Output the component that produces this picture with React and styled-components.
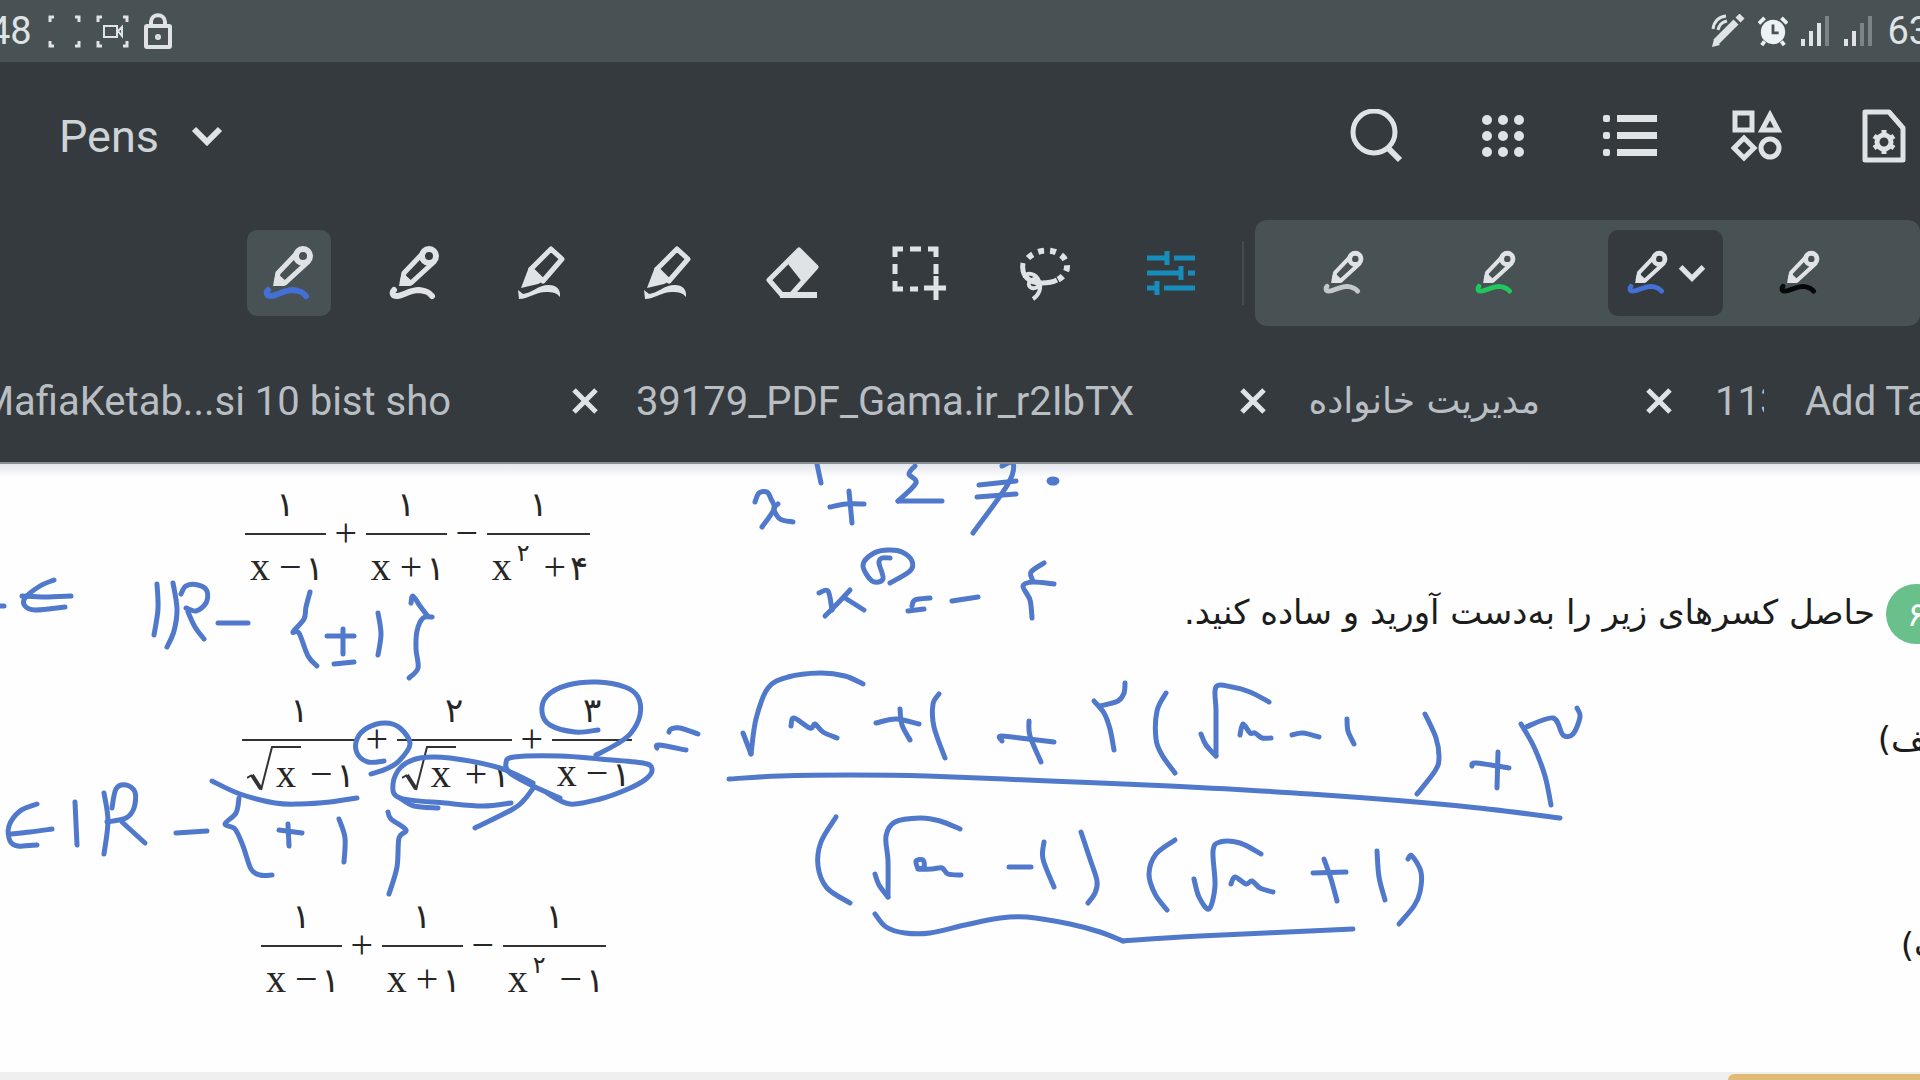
import React from "react";
import styled, { createGlobalStyle } from "styled-components";

const INK = "#5079cb";
const LIGHT = "#dfe3e5";

// every stroke is a flat list of x y pairs, smoothed by toPath
const inkStrokes = [
  // first domain
  "-4 605 4 605",
  "54 579 40 585 25 597 25 605 35 609 65 606",
  "22 595 45 596 71 595",
  "157 583 158 608 154 634",
  "173 582 177 608 174 630 167 646",
  "181 593 186 585 198 584 207 590 206 602 196 610 186 607",
  "188 611 195 626 204 638",
  "218 622 248 622",
  "310 591 306 606 304 618 293 631 299 632 308 655 317 665",
  "327 635 354 635",
  "343 628 343 653",
  "334 663 354 661",
  "378 612 381 633 378 654",
  "411 602 413 595 420 605 428 615 432 616 423 617 417 630 416 648 418 667 409 677",
  // second domain
  "37 803 20 810 9 825 10 840 18 845 37 844",
  "10 833 30 831 52 828",
  "75 801 77 844",
  "104 792 108 820 104 853",
  "112 807 116 788 126 784 135 791 134 807 126 817 107 821",
  "122 821 145 842",
  "176 832 207 830",
  "239 797 236 812 225 823 235 828 243 845 251 868 260 874 272 874",
  "279 829 302 832",
  "288 823 289 845",
  "339 818 345 837 344 861",
  "388 811 391 818 406 829 399 837 397 866 389 893",
  // marks on the printed fractions
  "212 780 240 793 275 802 300 803 330 801 357 797",
  "384 760 368 761 357 752 357 738 367 727 385 722 400 727 410 743 399 760 386 768 371 773",
  "511 802 483 805 445 802 400 797 393 783 401 766 420 757 450 757 500 767 533 782",
  "400 797 414 805 438 807",
  "534 786 524 799 513 808 475 827",
  "560 797 533 785 510 772 506 762 514 756 560 755 600 758 643 762 652 768 646 778 628 788 600 798 570 803 547 792",
  "598 729 575 731 550 724 542 711 547 695 568 684 597 681 625 686 638 696 640 714 631 732 617 743 596 754",
  "669 731 671 728 680 727 698 733",
  "657 747 659 744 686 749",
  // condition on the denominator
  "755 501 759 492 767 491 771 498 774 508 762 526",
  "778 503 774 508 780 518 793 521",
  "817 463 821 482",
  "830 506 846 503 864 503",
  "849 490 852 522",
  "915 465 909 473 916 482 898 500",
  "898 500 942 500",
  "979 484 1016 480",
  "977 496 1016 493",
  "1002 465 1013 462 1008 483 973 532",
  "819 592 828 590 832 609",
  "850 589 838 602 825 615",
  "845 597 864 609",
  "890 582 910 570 912 560 902 551 889 549 874 552 863 564 872 580 883 578 879 562 882 557 890 557",
  "912 605 915 599 930 597",
  "908 610 924 608",
  "952 600 978 596",
  "1044 562 1031 571 1033 580",
  "1054 583 1033 581 1023 585 1030 599 1032 617",
  // numerator of the result
  "743 732 751 753",
  "751 753 756 718 768 687 788 676 820 672 845 675 863 683",
  "791 725 794 717 810 727 815 723 823 731 837 737",
  "876 722 896 718 919 723",
  "900 708 902 724 910 739",
  "939 693 933 703 934 726 945 757",
  "1002 740 1001 735 1028 738 1054 741",
  "1029 720 1030 735 1041 761",
  "1094 700 1104 712 1110 728 1114 749",
  "1100 705 1118 700 1124 692 1125 682",
  "1166 692 1157 710 1156 738 1162 754 1175 772",
  "1201 733 1206 744 1216 755",
  "1216 755 1216 710 1216 686 1232 686 1250 691 1269 701",
  "1240 734 1243 723 1250 732 1255 732 1262 737 1271 737",
  "1292 734 1303 732 1319 736",
  "1347 718 1348 730 1354 743",
  "1425 713 1436 737 1439 757 1435 770 1417 793",
  "1472 765 1476 762 1509 767",
  "1498 751 1497 787",
  "1521 723 1534 746 1545 775 1551 804",
  "1526 726 1553 717 1563 734 1573 733 1580 716 1577 707",
  "729 778 780 775 850 774 927 775 1050 780 1170 785 1310 793 1460 805 1560 817",
  // denominator of the result
  "836 816 821 841 818 865 827 887 850 902",
  "875 873 879 884 888 896",
  "888 896 888 860 886 835 895 821 920 817 940 820 960 828",
  "918 868 916 860 923 859 924 866 918 868 932 868 942 867 948 873 961 874",
  "1009 866 1031 866",
  "1044 841 1043 858 1054 886",
  "1081 831 1090 858 1097 880 1095 892 1088 902",
  "1175 839 1156 853 1149 873 1155 893 1167 909",
  "1194 878 1199 896 1209 908 1215 885 1213 850 1220 841 1240 842 1261 853",
  "1231 883 1235 876 1246 883 1252 880 1260 887 1273 891",
  "1313 872 1346 871",
  "1324 858 1331 878 1337 900",
  "1377 850 1379 876 1385 899",
  "1408 858 1412 855 1421 871 1420 891 1414 905 1399 923",
  "875 913 886 926 905 932 930 932 965 924 1000 917 1027 916 1070 923 1100 931 1123 940",
  "1123 940 1200 935 1353 928",
];

const toPath = (stroke) => {
  const n = stroke.split(" ").map(Number);
  const pts = [];
  for (let i = 0; i < n.length; i += 2) pts.push([n[i], n[i + 1]]);
  let d = `M${pts[0].join(" ")}`;
  for (let i = 0; i < pts.length - 1; i++) {
    const a = pts[i - 1] || pts[i];
    const b = pts[i];
    const c = pts[i + 1];
    const e = pts[i + 2] || c;
    d += `C${b[0] + (c[0] - a[0]) / 6} ${b[1] + (c[1] - a[1]) / 6} ${
      c[0] - (e[0] - b[0]) / 6
    } ${c[1] - (e[1] - b[1]) / 6} ${c[0]} ${c[1]}`;
  }
  return d;
};

const PenIcon = ({ ink = LIGHT, size = 52 }) => (
  <svg width={size} height={(size * 56) / 52} viewBox="0 0 52 56" fill="none">
    <path
      d="M13 38 L15 28 L35 7 M46 16 L22 38 H13"
      stroke={LIGHT}
      strokeWidth="5"
      strokeLinejoin="round"
    />
    <path d="M10 41 L13 27 L25 38 L21 41 Z" fill={LIGHT} />
    <circle cx="40" cy="11" r="7" stroke={LIGHT} strokeWidth="6" />
    <path
      d="M5 45 C3 47 3 51 7 51 C14 51 20 45 30 45 C37 46 40 47 43 51"
      stroke={ink}
      strokeWidth="6"
      strokeLinecap="round"
    />
  </svg>
);

const HighlighterIcon = () => (
  <svg width="52" height="56" viewBox="0 0 52 56" fill="none">
    <path
      d="M36 4 L47 14 L28 36 L16 24 Z"
      stroke={LIGHT}
      strokeWidth="5"
      strokeLinejoin="round"
    />
    <path d="M14 22 L29 36 L23 39 L6 43 Z" fill={LIGHT} />
    <path
      d="M3 45 L4 54 C13 54 21 47 31 47 C38 47 42 48 45 52 C46 44 41 40 34 40 C23 40 17 48 8 49 Z"
      fill={LIGHT}
    />
  </svg>
);

const EraserIcon = () => (
  <svg width="54" height="56" viewBox="0 0 54 56" fill="none">
    <path
      d="M33 5 L50 22 L25 50 L16 50 L3 35 Z"
      stroke={LIGHT}
      strokeWidth="5"
      strokeLinejoin="round"
    />
    <path d="M33 5 L51 22 L37 38 L22 19 Z" fill={LIGHT} />
    <path d="M14 50 H51" stroke={LIGHT} strokeWidth="6" />
  </svg>
);

const SelectIcon = () => (
  <svg width="54" height="56" viewBox="0 0 54 56" stroke={LIGHT} strokeWidth="5" fill="none">
    <path d="M3 12 V4 H11 M36 4 H44 V12 M3 36 V44 H11 M18 4 H29 M3 19 V29 M44 19 V29 M18 44 H26" />
    <path d="M44 31 V55 M32 43 H55" />
  </svg>
);

const LassoIcon = () => (
  <svg width="54" height="56" viewBox="0 0 54 56" stroke={LIGHT} fill="none">
    <path d="M10 13 C20 3 38 3 46 13 C53 23 47 33 35 37" strokeWidth="6" strokeDasharray="6 6" />
    <path d="M5 18 C3 30 10 38 24 38 C30 38 35 37 39 35" strokeWidth="5" />
    <path
      d="M7 33 C7 26 18 28 21 36 C24 43 21 50 15 54 M18 34 C11 34 8 41 14 43 C18 44 21 41 22 38"
      strokeWidth="4"
    />
  </svg>
);

const SlidersIcon = () => (
  <svg width="50" height="46" viewBox="0 0 50 46" stroke="#168dbb" strokeWidth="5" fill="none">
    <path d="M1 8 H21 M28 8 H49 M21 1 V15" />
    <path d="M1 23 H35 M42 23 H49 M35 16 V30" />
    <path d="M1 38 H11 M18 38 H49 M11 31 V45" />
  </svg>
);

const ChevronIcon = ({ w = 32, h = 20 }) => (
  <svg width={w} height={h} viewBox="0 0 32 20" fill="none">
    <path d="M3 3 L16 16 L29 3" stroke={LIGHT} strokeWidth="6" />
  </svg>
);

const SearchIcon = () => (
  <svg width="54" height="54" viewBox="0 0 54 54" stroke={LIGHT} strokeWidth="5" fill="none">
    <circle cx="25" cy="23" r="21" />
    <path d="M38 38 L51 51" strokeWidth="6" />
  </svg>
);

const GridIcon = () => (
  <svg width="42" height="42" viewBox="0 0 42 42" fill={LIGHT}>
    {[5, 21, 37].map((y) =>
      [5, 21, 37].map((x) => <circle key={x + "-" + y} cx={x} cy={y} r="5" />)
    )}
  </svg>
);

const ListIcon = () => (
  <svg width="54" height="44" viewBox="0 0 54 44" fill={LIGHT}>
    {[5, 22, 39].map((y) => (
      <g key={y}>
        <rect x="0" y={y - 4} width="7" height="7" rx="2" />
        <rect x="14" y={y - 4} width="40" height="7" />
      </g>
    ))}
  </svg>
);

const ShapesIcon = () => (
  <svg width="52" height="52" viewBox="0 0 52 52" stroke={LIGHT} strokeWidth="5" fill="none">
    <rect x="4" y="3" width="17" height="17" />
    <path d="M39 5 L47 20 H31 Z" />
    <path d="M13 28 L23 38 L13 48 L3 38 Z" />
    <circle cx="39" cy="38" r="9" />
  </svg>
);

const PageSettingsIcon = () => (
  <svg width="44" height="54" viewBox="0 0 44 54" stroke={LIGHT} fill="none">
    <path d="M3 3 H27 L41 19 V51 H3 Z" strokeWidth="5" strokeLinejoin="round" />
    <circle cx="22" cy="33" r="7" strokeWidth="5" />
    <path
      d="M22 21 V25 M22 41 V45 M12 27 L15 29 M29 37 L32 39 M32 27 L29 29 M15 37 L12 39"
      strokeWidth="5"
    />
  </svg>
);

const CloseIcon = () => (
  <svg width="26" height="26" viewBox="0 0 26 26" stroke={LIGHT} strokeWidth="5">
    <path d="M2 2 L24 24 M24 2 L2 24" />
  </svg>
);

const FrameIcon = ({ camera }) => (
  <svg width="33" height="33" viewBox="0 0 33 33" stroke={LIGHT} strokeWidth="3" fill="none">
    <path d="M2 7 V2 H6 M27 2 H31 V7 M2 26 V31 H6 M27 31 H31 V26" />
    {camera && <path d="M8 11 H21 V22 H8 Z M22 16 L26 12 V21 Z" strokeWidth="2" />}
  </svg>
);

const LockIcon = () => (
  <svg width="28" height="36" viewBox="0 0 28 36" stroke={LIGHT} strokeWidth="4" fill="none">
    <rect x="2" y="13" width="24" height="21" rx="1" />
    <path d="M7 13 V9 C7 0 21 0 21 9 V13" />
    <circle cx="14" cy="24" r="1" fill={LIGHT} />
  </svg>
);

const StylusIcon = () => (
  <svg width="34" height="34" viewBox="0 0 34 34" fill="none" stroke={LIGHT}>
    <path d="M5 28 L25 8" strokeWidth="7" />
    <path d="M27 6 L31 2" strokeWidth="7" />
    <path d="M1 33 L3 25 L9 31 Z" fill={LIGHT} stroke="none" />
    <path d="M2 15 C3 7 8 3 15 2 M7 16 C8 11 11 8 16 7" strokeWidth="3" />
  </svg>
);

const AlarmIcon = () => (
  <svg width="30" height="32" viewBox="0 0 32 32" fill="none">
    <circle cx="16" cy="17" r="13" fill="#edf2f4" />
    <path d="M1 8 L7 2 M31 8 L25 2 M7 27 L4 31 M25 27 L28 31" stroke="#edf2f4" strokeWidth="4" />
    <path d="M16 9 V18 H22" stroke="#485153" strokeWidth="3" />
  </svg>
);

const SignalIcon = ({ level }) => (
  <svg width="30" height="30" viewBox="0 0 30 30">
    {[7, 15, 23, 30].map((h, i) => (
      <rect
        key={h}
        x={i * 8}
        y={30 - h}
        width="4"
        height={h}
        fill={i < level ? LIGHT : "#7b8486"}
      />
    ))}
  </svg>
);

const Radical = ({ children }) => (
  <Root>
    <svg width="26" height="46" viewBox="0 0 26 46" fill="none" stroke="#333">
      <path d="M0 32 L5 29" strokeWidth="2" />
      <path d="M5 29 L14 43" strokeWidth="4" />
      <path d="M14 44 L25 1 H26" strokeWidth="2" />
    </svg>
    <Radicand>{children}</Radicand>
  </Root>
);

// one printed symbol: "√x" is a root, "^۲" a power
const Symbol = ({ value }) => {
  if (value[0] === "√") return <Radical>{value.slice(1)}</Radical>;
  if (value[0] === "^") return <Power>{value.slice(1)}</Power>;
  if (value === "+" || value === "−") return <Op>{value}</Op>;
  if (value === "x") return <span>x</span>;
  return <Digit>{value}</Digit>;
};

const equations = [
  {
    indent: 245,
    terms: [
      { top: "۱", bottom: "x − ۱" },
      { sign: "+", top: "۱", bottom: "x + ۱" },
      { sign: "−", top: "۱", bottom: "x ^۲ + ۴" },
    ],
  },
  {
    indent: 242,
    terms: [
      { top: "۱", bottom: "√x − ۱" },
      { sign: "+", top: "۲", bottom: "√x + ۱" },
      { sign: "+", top: "۳", bottom: "x − ۱" },
    ],
  },
  {
    indent: 261,
    terms: [
      { top: "۱", bottom: "x − ۱" },
      { sign: "+", top: "۱", bottom: "x + ۱" },
      { sign: "−", top: "۱", bottom: "x ^۲ − ۱" },
    ],
  },
];

const tools = [
  { name: "Pen 1", icon: <PenIcon ink="#4470d6" />, active: true },
  { name: "Pen 2", icon: <PenIcon /> },
  { name: "Highlighter 1", icon: <HighlighterIcon /> },
  { name: "Highlighter 2", icon: <HighlighterIcon /> },
  { name: "Eraser", icon: <EraserIcon /> },
  { name: "Select area", icon: <SelectIcon /> },
  { name: "Lasso", icon: <LassoIcon /> },
  { name: "Tool settings", icon: <SlidersIcon /> },
];

const presets = [
  { name: "Grey pen", ink: "#c3c8ca" },
  { name: "Green pen", ink: "#1fc75c" },
  { name: "Blue pen", ink: "#4470d6", active: true },
  { name: "Black pen", ink: "#050708" },
];

const App = () => {
  return (
    <Screen>
      <GlobalStyle />
      <StatusBar>
        <StatusGroup>
          <span>48</span>
          <StatusIcons>
            <FrameIcon />
            <FrameIcon camera />
            <LockIcon />
          </StatusIcons>
        </StatusGroup>
        <StatusGroup $end>
          <StylusIcon />
          <AlarmIcon />
          <SignalIcon level={3} />
          <SignalIcon level={2} />
          <span>63%</span>
        </StatusGroup>
      </StatusBar>
      <Header>
        <NavBar>
          <MenuButton>
            Pens
            <ChevronIcon />
          </MenuButton>
          <NavIcons>
            <NavButton aria-label="Search"><SearchIcon /></NavButton>
            <NavButton aria-label="Thumbnails"><GridIcon /></NavButton>
            <NavButton aria-label="Outline"><ListIcon /></NavButton>
            <NavButton aria-label="Shapes"><ShapesIcon /></NavButton>
            <NavButton aria-label="Page settings"><PageSettingsIcon /></NavButton>
          </NavIcons>
        </NavBar>
        <ToolBar>
          <Tools>
            {tools.map((t) => (
              <ToolButton key={t.name} aria-label={t.name} $active={t.active}>
                {t.icon}
              </ToolButton>
            ))}
          </Tools>
          <Divider />
          <Presets>
            {presets.map((p) => (
              <PresetButton key={p.name} aria-label={p.name} $active={p.active}>
                <PenIcon ink={p.ink} size={42} />
                {p.active && <ChevronIcon w={28} h={18} />}
              </PresetButton>
            ))}
          </Presets>
        </ToolBar>
        <TabBar>
          <Tab $width={598} $gap={121}>
            <TabLabel href="#mafia">MafiaKetab...si 10 bist sho</TabLabel>
            <CloseButton aria-label="Close tab"><CloseIcon /></CloseButton>
          </Tab>
          <Tab $width={668}>
            <TabLabel href="#gama">39179_PDF_Gama.ir_r2IbTX</TabLabel>
            <CloseButton aria-label="Close tab"><CloseIcon /></CloseButton>
          </Tab>
          <Tab $width={406}>
            <TabLabel href="#family" lang="fa" dir="rtl">مدیریت خانواده</TabLabel>
            <CloseButton aria-label="Close tab"><CloseIcon /></CloseButton>
          </Tab>
          <LastTab>
            <TabLabel href="#last">113</TabLabel>
          </LastTab>
          <AddTab>Add Tab</AddTab>
        </TabBar>
      </Header>
      <Page>
        <Equations>
          {equations.map((eq) => (
            <Equation key={eq.indent} $indent={eq.indent}>
              {eq.terms.map((term, i) => (
                <React.Fragment key={i}>
                  {term.sign && <Sign>{term.sign}</Sign>}
                  <Fraction>
                    <Numerator>{term.top}</Numerator>
                    <Denominator>
                      {term.bottom.split(" ").map((s, j) => (
                        <Symbol key={j} value={s} />
                      ))}
                    </Denominator>
                  </Fraction>
                </React.Fragment>
              ))}
            </Equation>
          ))}
        </Equations>
        <Question lang="fa" dir="rtl">
          <QuestionTitle>
            <Badge>۶</Badge>
            <QuestionText>حاصل کسرهای زیر را به‌دست آورید و ساده کنید.</QuestionText>
          </QuestionTitle>
          <Parts>
            <span>الف)</span>
            <span>ب)</span>
          </Parts>
        </Question>
        <Ink width="1920" height="616" viewBox="0 463 1920 616">
          {inkStrokes.map((s) => (
            <path key={s} d={toPath(s)} />
          ))}
          <ellipse cx="1053" cy="480" rx="4" ry="2" />
        </Ink>
      </Page>
      <NextPage>
        <NextBanner />
      </NextPage>
    </Screen>
  );
};

const GlobalStyle = createGlobalStyle`
  * {
    box-sizing: border-box;
  }
  body {
    margin: 0;
    overflow: hidden;
    font-family: Roboto, "DejaVu Sans", sans-serif;
  }
  button {
    padding: 0;
    border: none;
    background: none;
    color: inherit;
    font: inherit;
    cursor: pointer;
  }
  svg {
    display: block;
    flex-shrink: 0;
  }
`;

const Screen = styled.div`
  display: flex;
  flex-direction: column;
  min-height: 100vh;
  overflow: hidden;
  background: #fefefe;
`;
const StatusBar = styled.div`
  display: flex;
  justify-content: space-between;
  height: 62px;
  background: #485153;
  color: #dfe3e5;
  font-size: 38px;
  line-height: 62px;
`;
const StatusGroup = styled.div`
  display: flex;
  align-items: center;
  gap: ${(p) => (p.$end ? "13px" : "16px")};
  margin-left: ${(p) => (p.$end ? "0" : "-11px")};
  margin-right: ${(p) => (p.$end ? "-38px" : "0")};
`;
const StatusIcons = styled.div`
  display: flex;
  align-items: center;
  gap: 15px;
`;
const Header = styled.header`
  background: #353a3e;
  border-bottom: 2px solid #8a8f92;
`;
const NavBar = styled.div`
  display: flex;
  align-items: center;
  justify-content: space-between;
  height: 150px;
  padding: 0 0 2px 59px;
`;
const MenuButton = styled.button`
  display: flex;
  align-items: center;
  gap: 32px;
  && {
    color: #ced3d7;
    font-size: 45px;
  }
`;
const NavIcons = styled.nav`
  display: flex;
  margin-right: -27px;
`;
const NavButton = styled.button`
  display: flex;
  align-items: center;
  justify-content: center;
  width: 127px;
  height: 84px;
`;
const ToolBar = styled.div`
  display: flex;
  align-items: center;
  height: 122px;
  padding-left: 247px;
`;
const Tools = styled.div`
  display: flex;
  gap: 42px;
`;
const ToolButton = styled.button`
  display: flex;
  align-items: center;
  justify-content: center;
  width: 84px;
  height: 86px;
  && {
    border-radius: 10px;
    background: ${(p) => (p.$active ? "#485153" : "transparent")};
  }
`;
const Divider = styled.div`
  width: 2px;
  height: 64px;
  margin: 0 11px 0 29px;
  background: #464b50;
`;
const Presets = styled.div`
  display: flex;
  flex: 1;
  align-items: center;
  gap: 37px;
  height: 106px;
  padding-left: 49px;
  border-radius: 12px;
  background: #485153;
`;
const PresetButton = styled.button`
  display: flex;
  align-items: center;
  gap: 9px;
  width: 115px;
  height: 86px;
  && {
    padding-left: 19px;
    border-radius: 10px;
    background: ${(p) => (p.$active ? "#353a3e" : "transparent")};
  }
`;
const TabBar = styled.div`
  display: flex;
  align-items: center;
  height: 128px;
  padding-top: 5px;
  color: #b9bec3;
  font-size: 40px;
  line-height: 48px;
  white-space: nowrap;
`;
const Tab = styled.div`
  display: flex;
  flex: none;
  align-items: center;
  justify-content: flex-end;
  gap: ${(p) => p.$gap || 106}px;
  width: ${(p) => p.$width}px;
`;
const TabLabel = styled.a`
  padding-top: 3px;
  color: inherit;
  text-decoration: none;
  &:lang(fa) {
    padding: 0;
    font-family: "DejaVu Sans", sans-serif;
    font-size: 36px;
  }
`;
const CloseButton = styled.button`
  width: 26px;
  height: 26px;
`;
const LastTab = styled.div`
  display: flex;
  flex: none;
  width: 92px;
  padding-left: 43px;
  overflow: hidden;
`;
const AddTab = styled.button`
  flex: none;
  && {
    margin-left: 41px;
    padding-top: 3px;
  }
`;
const Page = styled.main`
  position: relative;
  display: flex;
  flex: 1;
  justify-content: space-between;
  overflow: hidden;
  background: linear-gradient(#e4e7ec, #fefefe 14px);
`;
const Ink = styled.svg`
  position: absolute;
  top: 0;
  left: 0;
  fill: none;
  stroke: ${INK};
  stroke-width: 5;
  stroke-linecap: round;
  stroke-linejoin: round;
  pointer-events: none;
`;
const Equations = styled.div`
  display: grid;
  grid-template-rows: 206px 206px auto;
  align-content: start;
  padding-top: 20px;
  color: #262626;
  font-family: "Liberation Serif", "DejaVu Sans", serif;
  font-size: 40px;
  line-height: 40px;
`;
const Equation = styled.div`
  display: flex;
  align-items: flex-start;
  padding-left: ${(p) => p.$indent}px;
`;
const Fraction = styled.div`
  display: flex;
  flex-direction: column;
  align-items: stretch;
`;
const Numerator = styled.div`
  height: 51px;
  border-bottom: 2px solid #333;
  text-align: center;
  font-family: "DejaVu Sans", sans-serif;
  font-size: 34px;
`;
const Denominator = styled.div`
  display: flex;
  align-items: baseline;
  padding: 12px 2px 0 5px;
`;
const Sign = styled.div`
  width: 40px;
  padding-top: 29px;
  text-align: center;
`;
const Op = styled.span`
  padding: 0 4px 0 9px;
`;
const Digit = styled.span`
  font-family: "DejaVu Sans", sans-serif;
  font-size: 34px;
`;
const Power = styled.sup`
  align-self: flex-start;
  margin: -6px 5px 0;
  font-family: "DejaVu Sans", sans-serif;
  font-size: 24px;
  line-height: 24px;
`;
const Root = styled.span`
  display: flex;
  align-items: flex-start;
  margin-top: -7px;
`;
const Radicand = styled.span`
  align-self: baseline;
  padding: 6px 5px 0 3px;
  border-top: 2px solid #333;
`;
const Question = styled.section`
  display: flex;
  flex-direction: column;
  margin-right: -26px;
  padding-top: 120px;
  color: #1c1c1c;
  font-family: "DejaVu Sans", sans-serif;
  font-size: 34px;
  white-space: nowrap;
`;
const QuestionTitle = styled.div`
  display: flex;
  align-items: center;
  gap: 11px;
  height: 60px;
  margin-bottom: 67px;
`;
const Badge = styled.span`
  flex: none;
  width: 60px;
  height: 60px;
  border-radius: 50%;
  background: #69c08b;
  color: #fff;
  line-height: 60px;
  text-align: center;
`;
const QuestionText = styled.h1`
  margin: 0;
  padding-bottom: 4px;
  font-size: 34px;
  font-weight: 400;
`;
const Parts = styled.div`
  display: grid;
  grid-template-rows: 206px auto;
  line-height: 56px;
`;
const NextPage = styled.div`
  display: flex;
  justify-content: flex-end;
  height: 8px;
  padding-top: 2px;
  background: #efefef;
`;
const NextBanner = styled.div`
  width: 10%;
  height: 6px;
  border-top-left-radius: 12px;
  background: #dfbb76;
`;

export default App;
